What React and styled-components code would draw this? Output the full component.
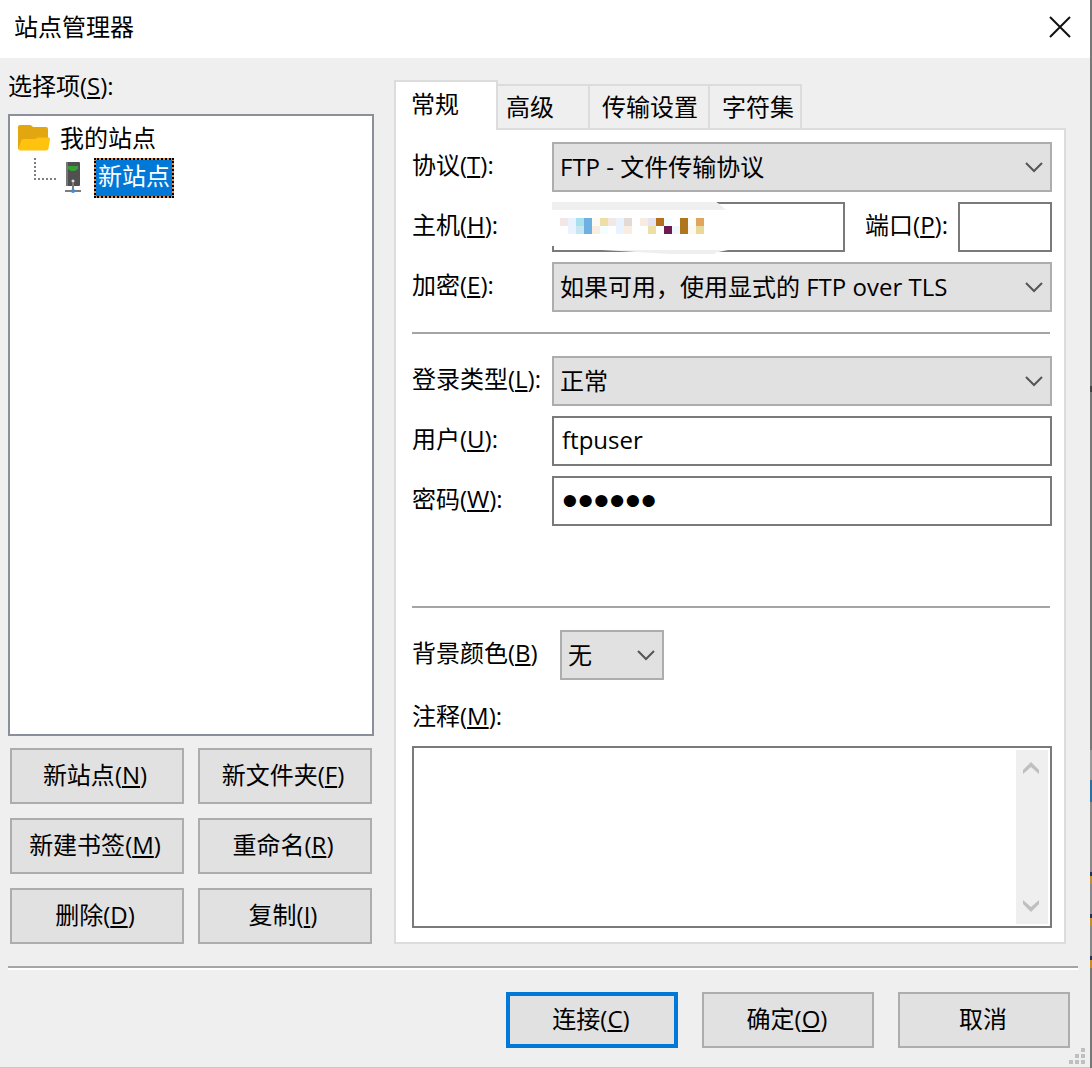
/**
 *
 * SiteManager
 * 站点管理器
 */

import React from 'react';
import styled, { createGlobalStyle } from 'styled-components';

const GlobalStyle = createGlobalStyle`
  * {
    box-sizing: border-box;
  }
  body {
    margin: 0;
    color: #000;
    background: #efefef;
  }
  body, button, input, select, textarea {
    font-family: "Open Sans", "Noto Sans CJK SC", sans-serif;
    font-size: 24px;
    line-height: 32px;
  }
`;

const Screen = styled.div`
  display: flex;
  min-height: 100vh;
`;

const Window = styled.div`
  position: relative;
  flex: 1;
  display: flex;
  flex-direction: column;
  min-width: 0;
  background: #efefef;
  border-bottom: 1px solid #c8c8c8;
`;

/* 窗口右侧露出的桌面 */
const Desktop = styled.div`
  width: 2px;
  background: linear-gradient(
    #777 0 386px, #444 386px 392px, #777 392px 750px, #999 750px 780px,
    #2f6f9f 780px 802px, #888 802px 872px, #22305a 872px 876px, #c98a2c 876px 884px,
    #888 884px 914px, #22305a 914px 918px, #c98a2c 918px 926px, #888 926px 956px,
    #22305a 956px 960px, #c98a2c 960px 968px, #777 968px
  );
`;

const TitleBar = styled.header`
  display: flex;
  align-items: center;
  justify-content: space-between;
  height: 58px;
  padding: 0 18px 4px 14px;
  background: #fff;
`;

const Title = styled.h1`
  margin: 0;
  font-size: 24px;
  line-height: 32px;
  font-weight: 400;
`;

const CloseButton = styled.button`
  display: flex;
  padding: 0;
  border: none;
  background: none;
`;

const Body = styled.main`
  flex: 1;
  display: grid;
  grid-template-columns: 366px minmax(0, 1fr);
  gap: 20px;
  padding: 12px 24px 0 8px;
`;

const Side = styled.section`
  display: flex;
  flex-direction: column;
`;

const SideTitle = styled.h2`
  margin: 0 0 12px;
  font-size: 24px;
  line-height: 32px;
  font-weight: 400;
`;

const Key = styled.span`
  text-decoration: underline;
  text-decoration-thickness: 2px;
  text-underline-offset: 2px;
`;

const Tree = styled.ul`
  flex: 1;
  margin: 0;
  padding: 2px 8px;
  list-style: none;
  background: #fff;
  border: 2px solid #8a8f99;
`;

const TreeItem = styled.li`
  display: flex;
  align-items: center;
  height: 40px;
  gap: 10px;
  padding-left: ${({ $level }) => $level * 16}px;
`;

const Selected = styled.span`
  padding: 0 2px 4px;
  color: #fff;
  background: linear-gradient(#0078d7, #0078d7) padding-box, #f08a3c border-box;
  border: 2px dotted #000;
`;

const SideButtons = styled.div`
  display: grid;
  grid-template-columns: 1fr 1fr;
  gap: 14px;
  padding: 12px 2px 0;
`;

const Button = styled.button`
  height: 56px;
  padding: 0 12px 2px 8px;
  color: #000;
  background: #e1e1e1;
  border: ${({ $primary }) => $primary ? '4px solid #0078d7' : '2px solid #adadad'};
`;

const Main = styled.section`
  display: flex;
  flex-direction: column;
  padding-top: 10px;
`;

const Tabs = styled.div`
  display: flex;
  align-items: flex-end;
  height: 50px;
  margin-bottom: -2px;
`;

const Tab = styled.button`
  width: ${({ $width }) => $width}px;
  height: ${({ $active }) => $active ? 50 : 46}px;
  margin-right: -2px;
  padding: 0 0 ${({ $active }) => $active ? 4 : 0}px ${({ $pad }) => $pad}px;
  text-align: left;
  white-space: nowrap;
  color: #000;
  background: ${({ $active }) => $active ? '#fff' : '#efefef'};
  border: 2px solid #dcdcdc;
  border-bottom-width: ${({ $active }) => $active ? 0 : 2}px;
  z-index: ${({ $active }) => $active ? 1 : 0};
`;

const Panel = styled.form`
  flex: 1;
  display: flex;
  flex-direction: column;
  padding: 12px 12px 14px 16px;
  background: #fff;
  border: 2px solid #dcdcdc;
`;

const Fields = styled.div`
  display: flex;
  flex-direction: column;
  gap: 10px;
`;

const Row = styled.div`
  display: flex;
  align-items: center;
  gap: ${({ $gap }) => $gap || 0}px;
`;

const Label = styled.label`
  flex-shrink: 0;
  min-width: ${({ $short }) => $short ? 0 : 140}px;
  padding-bottom: 4px;
  white-space: nowrap;
`;

const Input = styled.input`
  display: block;
  width: 100%;
  height: 50px;
  padding: 0 8px 4px;
  color: #000;
  background: #fff;
  border: 2px solid #7a7a7a;
  border-radius: 0;
`;

const Password = styled(Input)`
  padding: 0 8px;
  font-family: "Liberation Sans", sans-serif;
  font-size: 45px;
`;

const HostBox = styled.div`
  position: relative;
  flex: 1;
  margin-right: 20px;
`;

const Mosaic = styled.svg`
  position: absolute;
  top: -2px;
  left: 0;
  pointer-events: none;
`;

const PortBox = styled.div`
  width: 94px;
  margin-left: 10px;
`;

const SelectBox = styled.div`
  flex: ${({ $width }) => $width ? `0 0 ${$width}px` : 1};
  display: grid;
  align-items: center;
  min-width: 0;
  > * {
    grid-area: 1 / 1;
  }
  > svg {
    justify-self: end;
    margin-right: 9px;
    pointer-events: none;
  }
`;

const SelectField = styled.select`
  appearance: none;
  width: 100%;
  height: 50px;
  padding: 0 32px 0 6px;
  color: #000;
  background: #e1e1e1;
  border: 2px solid #adadad;
  border-radius: 0;
`;

const Rule = styled.hr`
  width: auto;
  height: 2px;
  margin: ${({ $top }) => $top}px 2px 22px 0;
  border: none;
  background: #a5a5a5;
`;

const NoteLabel = styled.label`
  margin: 20px 0 14px;
`;

const NoteBox = styled.div`
  display: flex;
  height: 182px;
  padding: 2px;
  border: 2px solid #7a7a7a;
`;

const NoteText = styled.textarea`
  flex: 1;
  min-width: 0;
  padding: 4px 6px;
  border: none;
  resize: none;
  outline: none;
`;

const ScrollBar = styled.div`
  display: flex;
  flex-direction: column;
  justify-content: space-between;
  width: 32px;
  background: #efefef;
`;

const ScrollButton = styled.button`
  display: flex;
  align-items: center;
  justify-content: center;
  height: 36px;
  padding: 0 2px 0 0;
  border: none;
  background: none;
`;

const Footer = styled.footer`
  display: flex;
  justify-content: flex-end;
  gap: 24px;
  margin: 22px 12px 0 8px;
  padding: 24px 8px 19px 0;
  border-top: 2px solid #a5a5a5;
  box-shadow: inset 0 2px 0 #fff;
`;

const FooterButton = styled(Button)`
  width: 172px;
  padding: 0 2px 2px 0;
`;

const Grip = styled.svg`
  position: absolute;
  right: 5px;
  bottom: 3px;
`;

const mosaicTop = ['#f3e6e4', '#e8f3ff', '#a8e0ee', '#6fb0e2', '#fdfaf6', '#eddfa5', '#f2e8e4', '#e8f3ff', '#e3d9d6', '', '#f8ece2', '#e4e4f2', '#b5701c', '#f4feff', '', '#b0761e', '#fefcf8', '#e0a660'];
const mosaicBottom = ['', '#e8f3ff', '#c6e6f1', '#6fb0e2', '#f9ece0', '#f4feff', '', '#e8f3ff', '#f9ece0', '', '', '#eddfa5', '', '#6b1b52', '#f0f8ff', '#b0761e', '#fdf8f0', '#e9d998'];

const tabList = [
  { name: '常规', width: 104, pad: 15 },
  { name: '高级', width: 94, pad: 8 },
  { name: '传输设置', width: 122, pad: 12 },
  { name: '字符集', width: 94, pad: 12 },
];

const sideButtons = [
  ['新站点', 'N'],
  ['新文件夹', 'F'],
  ['新建书签', 'M'],
  ['重命名', 'R'],
  ['删除', 'D'],
  ['复制', 'I'],
];

const Text = ({ name, hotkey, colon }) => (
  <>{name}(<Key>{hotkey}</Key>){colon ? ':' : ''}</>
);

const Select = ({ id, width, value }) => (
  <SelectBox $width={width}>
    <SelectField id={id} defaultValue={value}>
      <option>{value}</option>
    </SelectField>
    <svg width="18" height="12" viewBox="0 0 18 12" fill="none" stroke="#555" strokeWidth="2">
      <path d="M1 2l8 8 8-8" />
    </svg>
  </SelectBox>
);

const FolderIcon = () => (
  <svg width="32" height="28" viewBox="0 0 32 28">
    <path d="M0 3Q0 1 2 1h10q1 0 2 1l1 1h13q2 0 2 2v20H0z" fill="#e2a610" />
    <path d="M3 17q.6-2 2.600-2h12l2-1.500h10.800q1.900 0 1.600 1.500l-1.500 9.500q-.4 2-2.500 2H2q-2 0-1.600-2z" fill="#ffc20e" />
  </svg>
);

const BranchIcon = () => (
  <svg width="20" height="40" viewBox="0 0 20 40" overflow="visible" fill="none" stroke="#808080" strokeWidth="2" strokeDasharray="2 2">
    <path d="M1 0v22" />
    <path d="M0 21h22" />
  </svg>
);

const ServerIcon = () => (
  <svg width="20" height="34" viewBox="0 0 20 34">
    <path d="M3 1h12q1 0 1 1v22q0 1-1 1H3q-1 0-1-1V2q0-1 1-1z" fill="#505050" />
    <path d="M2 2q0-1 1-1h1v24H3q-1 0-1-1z" fill="#777" />
    <path d="M4 5h10v3l-3 2H7L4 8z" fill="#35a035" />
    <circle cx="9" cy="20" r="1.500" fill="#ddd" />
    <path d="M9 22v8M1 30h16" stroke="#7d7d7d" strokeWidth="2" />
    <circle cx="9" cy="30" r="2" fill="#3a8fe0" />
  </svg>
);

const HostMosaic = () => (
  <Mosaic width="176" height="54" viewBox="0 0 176 54">
    <path d="M0 2h164l12 8v40l-10 2H0z" fill="#fff" />
    <path d="M0 2h163q4 1 11 8H0z" fill="#efefef" />
    <path d="M0 46h2v4h58l50 2H0z" fill="#7a7a7a" />
    <path d="M50 50h119l-7 4h-44z" fill="#efefef" />
    {[mosaicTop, mosaicBottom].map((colors, row) => colors.map((color, index) => color && (
      <rect key={`${row}-${index}`} x={8 + index * 8} y={18 + row * 8} width="8" height="8" fill={color} />
    )))}
  </Mosaic>
);

export class SiteManager extends React.PureComponent {

  state = {
    tab: '常规',
  }

  handleTab = (tab) => {
    this.setState({ tab });
  }

  render() {
    const { tab } = this.state;
    return <Screen>
      <GlobalStyle />
      <Window>
        <TitleBar>
          <Title>站点管理器</Title>
          <CloseButton aria-label="关闭">
            <svg width="24" height="24" viewBox="0 0 24 24" stroke="#111" strokeWidth="2">
              <path d="M2 2l20 20M22 2L2 22" />
            </svg>
          </CloseButton>
        </TitleBar>
        <Body>
          <Side>
            <SideTitle><Text name="选择项" hotkey="S" colon /></SideTitle>
            <Tree>
              <TreeItem $level={0}><FolderIcon />我的站点</TreeItem>
              <TreeItem $level={1}><BranchIcon /><ServerIcon /><Selected>新站点</Selected></TreeItem>
            </Tree>
            <SideButtons>
              {sideButtons.map(([name, hotkey]) => (
                <Button key={name}><Text name={name} hotkey={hotkey} /></Button>
              ))}
            </SideButtons>
          </Side>
          <Main>
            <Tabs role="tablist">
              {tabList.map((item) => (
                <Tab
                  key={item.name}
                  role="tab"
                  aria-selected={item.name === tab}
                  $active={item.name === tab}
                  $width={item.width}
                  $pad={item.pad}
                  onClick={() => this.handleTab(item.name)}
                >{item.name}</Tab>
              ))}
            </Tabs>
            <Panel>
              <Fields>
                <Row>
                  <Label htmlFor="protocol"><Text name="协议" hotkey="T" colon /></Label>
                  <Select id="protocol" value="FTP - 文件传输协议" />
                </Row>
                <Row>
                  <Label htmlFor="host"><Text name="主机" hotkey="H" colon /></Label>
                  <HostBox>
                    <Input id="host" />
                    <HostMosaic />
                  </HostBox>
                  <Label htmlFor="port" $short><Text name="端口" hotkey="P" colon /></Label>
                  <PortBox><Input id="port" /></PortBox>
                </Row>
                <Row>
                  <Label htmlFor="encryption"><Text name="加密" hotkey="E" colon /></Label>
                  <Select id="encryption" value="如果可用，使用显式的 FTP over TLS" />
                </Row>
              </Fields>
              <Rule $top={20} />
              <Fields>
                <Row>
                  <Label htmlFor="logon"><Text name="登录类型" hotkey="L" colon /></Label>
                  <Select id="logon" value="正常" />
                </Row>
                <Row>
                  <Label htmlFor="user"><Text name="用户" hotkey="U" colon /></Label>
                  <Input id="user" defaultValue="ftpuser" />
                </Row>
                <Row>
                  <Label htmlFor="password"><Text name="密码" hotkey="W" colon /></Label>
                  <Password id="password" type="password" defaultValue="123456" />
                </Row>
              </Fields>
              <Rule $top={80} />
              <Row $gap={8}>
                <Label htmlFor="color"><Text name="背景颜色" hotkey="B" /></Label>
                <Select id="color" width={104} value="无" />
              </Row>
              <NoteLabel htmlFor="note"><Text name="注释" hotkey="M" colon /></NoteLabel>
              <NoteBox>
                <NoteText id="note" />
                <ScrollBar>
                  <ScrollButton type="button" aria-label="向上">
                    <svg width="16" height="12" viewBox="0 0 16 12"><path d="M0 8l8-8 8 8v4L8 5l-8 7z" fill="#bfbfbf" /></svg>
                  </ScrollButton>
                  <ScrollButton type="button" aria-label="向下">
                    <svg width="16" height="12" viewBox="0 0 16 12"><path d="M0 4l8 8 8-8V0L8 7 0 0z" fill="#bfbfbf" /></svg>
                  </ScrollButton>
                </ScrollBar>
              </NoteBox>
            </Panel>
          </Main>
        </Body>
        <Footer>
          <FooterButton $primary><Text name="连接" hotkey="C" /></FooterButton>
          <FooterButton><Text name="确定" hotkey="O" /></FooterButton>
          <FooterButton>取消</FooterButton>
        </Footer>
        <Grip width="16" height="16" viewBox="0 0 16 16" fill="#bfbfbf">
          <path d="M12 0h4v4h-4zM6 6h4v4H6zM12 6h4v4h-4zM0 12h4v4H0zM6 12h4v4H6zM12 12h4v4h-4z" />
        </Grip>
      </Window>
      <Desktop />
    </Screen>;
  }
}

export default SiteManager;
